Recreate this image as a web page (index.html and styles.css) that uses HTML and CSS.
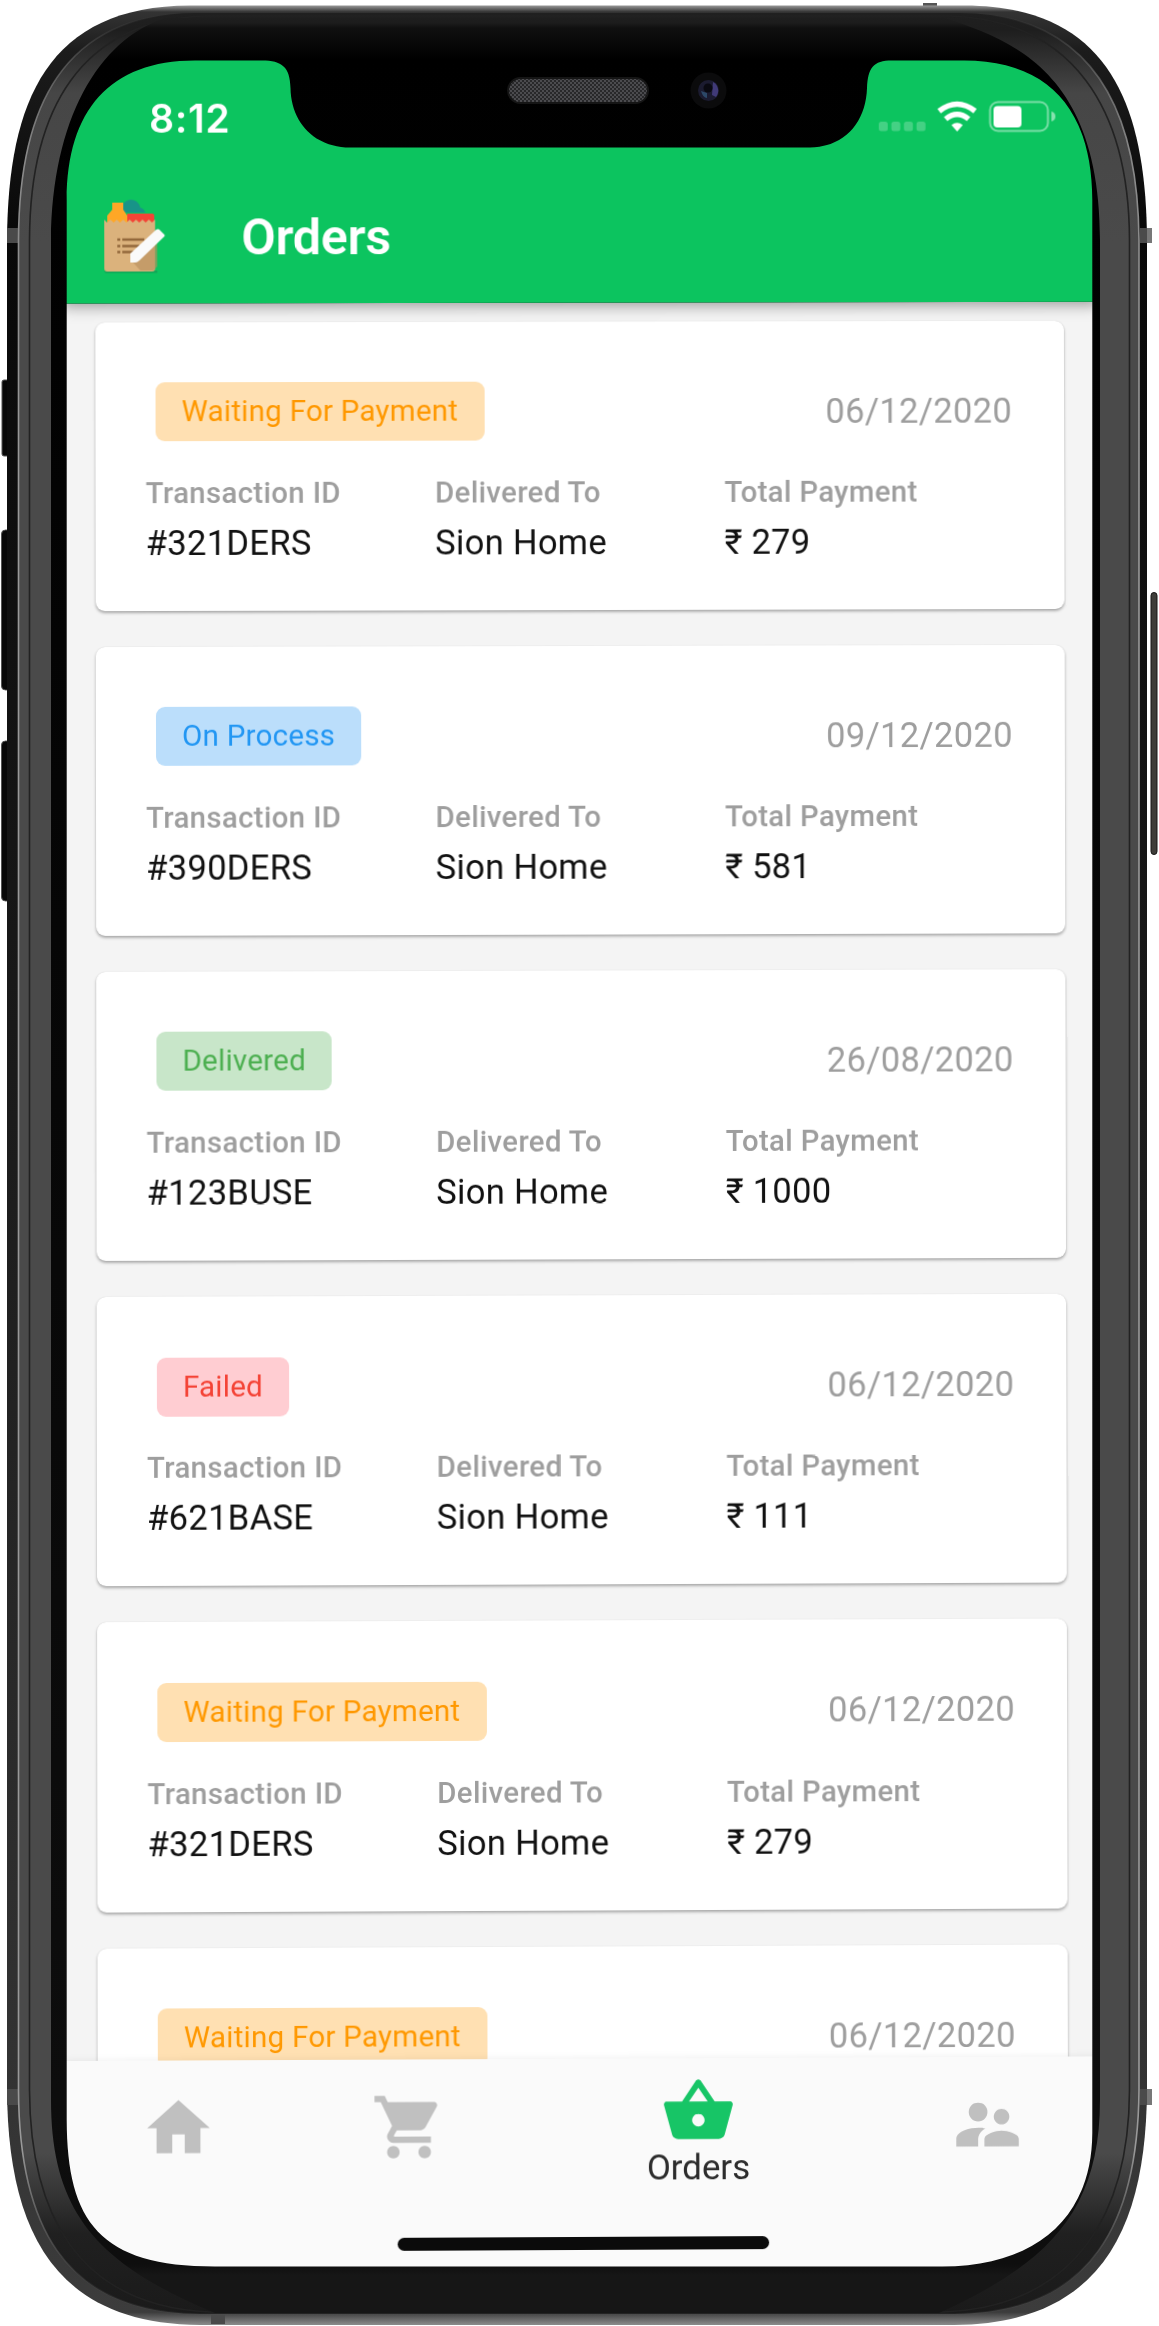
FILE: index.html
```html
<!DOCTYPE html>
<html lang="en">
<head>
<meta charset="utf-8">
<title>Orders</title>
<link rel="stylesheet" href="styles.css">
</head>
<body>
<div class="phone">
  <svg class="frame" viewBox="0 0 1159 2326" aria-hidden="true">
    <defs>
      <linearGradient id="edge" gradientUnits="userSpaceOnUse" x1="0" y1="5" x2="0" y2="2325">
        <stop offset="0" stop-color="#a0a0a0"/><stop offset=".003" stop-color="#333"/><stop offset=".02" stop-color="#1c1c1c"/>
        <stop offset=".1" stop-color="#080808"/><stop offset=".5" stop-color="#1c1c1c"/><stop offset=".9" stop-color="#333"/>
        <stop offset=".9945" stop-color="#3c3c3c"/><stop offset="1" stop-color="#8c8c8c"/>
      </linearGradient>
      <linearGradient id="band" gradientUnits="userSpaceOnUse" x1="0" y1="12" x2="0" y2="2314">
        <stop offset="0" stop-color="#202020"/><stop offset=".008" stop-color="#1e1e1e"/><stop offset=".035" stop-color="#464646"/>
        <stop offset=".1" stop-color="#4a4a4a"/><stop offset=".93" stop-color="#4a4a4a"/><stop offset=".965" stop-color="#202020"/>
        <stop offset="1" stop-color="#1a1a1a"/>
      </linearGradient>
      <linearGradient id="bezel" gradientUnits="userSpaceOnUse" x1="0" y1="14" x2="0" y2="2310">
        <stop offset="0" stop-color="#202020"/><stop offset=".004" stop-color="#1c1c1c"/><stop offset=".006" stop-color="#101010"/>
        <stop offset=".02" stop-color="#000"/><stop offset=".4" stop-color="#060606"/><stop offset=".98" stop-color="#0e0e0e"/>
        <stop offset=".985" stop-color="#161616"/><stop offset="1" stop-color="#161616"/>
      </linearGradient>
      <linearGradient id="shine" gradientUnits="userSpaceOnUse" x1="0" y1="14" x2="0" y2="2310">
        <stop offset="0" stop-color="#999" stop-opacity="0"/><stop offset=".06" stop-color="#888"/><stop offset=".2" stop-color="#999"/>
        <stop offset=".93" stop-color="#999"/><stop offset=".99" stop-color="#555" stop-opacity=".2"/>
      </linearGradient>
      <pattern id="mesh" width="4" height="4" patternUnits="userSpaceOnUse">
        <rect width="4" height="4" fill="#28282a"/><circle cx="1" cy="1" r=".9" fill="#5c5c60"/><circle cx="3" cy="3" r=".9" fill="#5c5c60"/>
      </pattern>
    </defs>
    <!-- side buttons -->
    <g fill="#080808" stroke="#555" stroke-width="1">
      <rect x="2" y="380" width="8" height="76" rx="2"/>
      <rect x="1.5" y="530" width="9" height="160" rx="4"/>
      <rect x="1.5" y="741" width="9" height="160" rx="4"/>
      <rect x="1151" y="592.500" width="6" height="262" rx="3" fill="#3e3d39" stroke="#161616"/>
    </g>
    <g fill="#777">
      <rect x="1140" y="228" width="12" height="15"/><rect x="1140" y="2089" width="12" height="16"/>
      <rect x="923" y="3" width="14" height="9" fill="#555"/>
    </g>
    <path fill="url(#edge)" d="M7 240C8 100 48 6 190 5.500H965C1106 6 1146 100 1147 240V2090C1146 2225 1104 2324 954 2325H200C50 2324 8 2225 7 2090Z"/>
    <path fill="#4a4a4a" d="M7 228h12v15H7zM7 2089h12v16H7zM211 2313h14v11h-14zM1140 228h7v15h-7zM1140 2089h7v16h-7z"/>
    <path fill="url(#band)" stroke="url(#shine)" stroke-width="1.600" d="M18.500 240C19 108 62 14 195 13H960C1092 14 1138 108 1139 240V2090C1138 2220 1094 2313 954 2314H200C60 2313 19 2220 18.500 2090Z"/>
    <path fill="none" stroke="#222" stroke-width="1.600" d="M29.500 240C30 110 80 20 205 16H950C1074 20 1129 110 1129.500 240V2090C1129 2210 1079 2306 944 2312H210C75 2306 30 2210 29.500 2090Z"/>
    <path fill="url(#bezel)" d="M51 240C52 120 98 40 165 18H945C1010 40 1100 70 1100 240V2100C1100 2215 1044 2265 939 2313H215C100 2265 51 2215 51 2100Z"/>
    <rect x="508" y="78" width="140" height="25" rx="12.500" fill="url(#mesh)" stroke="#151515" stroke-width="2"/>
    <circle cx="708.500" cy="90.500" r="18" fill="#0b0b0c"/>
    <circle cx="708.500" cy="90.500" r="10.500" fill="#1b1b30"/>
    <path fill="#403a78" d="M713 82a10 10 0 0 1 3 15l-4-2z"/><path fill="#2c4868" d="M701 91q2 7 6 7v-5z"/><circle cx="708" cy="88" r="4.500" fill="#090911"/>
  </svg>

  <main class="screen">
    <div class="app">
      <header class="top">
        <div class="status">
          <span class="time">8:12</span>
          <svg class="signals" viewBox="0 0 180 32" aria-hidden="true">
            <g fill="#fff" fill-opacity=".23"><rect x="0" y="21" width="9" height="9.500" rx="2.500"/><rect x="12.600" y="21" width="9" height="9.500" rx="2.500"/><rect x="25.200" y="21" width="9" height="9.500" rx="2.500"/><rect x="37.800" y="21" width="9" height="9.500" rx="2.500"/></g>
            <g fill="none" stroke="#fff" stroke-width="5.500"><path d="M60.500 10.500Q78.500 -3.500 96.500 10.500"/><path d="M67 18.500Q78.500 9 90 18.500"/></g>
            <path fill="#fff" d="M72.800 24.500Q78.500 20 84.200 24.500L78.500 31Z"/>
            <rect x="111.500" y="1.500" width="58" height="29" rx="8" fill="none" stroke="#fff" stroke-opacity=".45" stroke-width="2"/>
            <rect x="115" y="5.500" width="28" height="21.500" rx="4" fill="#fff"/>
            <path fill="#fff" fill-opacity=".5" d="M173 11q4 1 4 5t-4 5z"/>
          </svg>
        </div>
        <div class="bar">
          <svg class="logo" viewBox="0 0 64 76" aria-hidden="true">
            <path fill="#189488" d="M17 8q2-7 9-8 8 0 10 8 4 1 5 5H20z"/>
            <path fill="#ffa726" d="M8 3h11v7l4 6v9H3v-9l5-6z"/>
            <path fill="#f44336" d="M23 14h25q2 0 2 2v8H23z"/>
            <path fill="#178f50" opacity=".55" d="M0 71h53v2.500H1z"/>
            <path fill="#dbb27c" d="M0 20l3 3 3.200-3 3.200 3 3.200-3 3.200 3 3.200-3 3.200 3 3.200-3 3.200 3 3.200-3 3.200 3 3.200-3 3.200 3 3.200-3 3.200 3 3-3V69q0 3-3 3H3q-3 0-3-3z"/>
            <path fill="#b68d5d" opacity=".6" d="M27 61l9 10h13l4-4V36z"/>
            <path fill="none" stroke="#93683b" stroke-width="2.500" d="M13 40h3m2 0h22M13 46.500h3m2 0h17M13 52.500h3m2 0h12"/>
            <path fill="#fafafa" d="M26 54l26-24q2-1 3 0l5 5q1 1 0 2L35 61q-2 2-4 2h-5z"/>
          </svg>
          <h1>Orders</h1>
        </div>
      </header>

      <section class="list">
        <article class="card">
          <div class="head"><span class="tag waiting">Waiting For Payment</span><time>06/12/2020</time></div>
          <dl><div><dt>Transaction ID</dt><dd>#321DERS</dd></div><div><dt>Delivered To</dt><dd>Sion Home</dd></div><div><dt>Total Payment</dt><dd>₹ 279</dd></div></dl>
        </article>
        <article class="card">
          <div class="head"><span class="tag process">On Process</span><time>09/12/2020</time></div>
          <dl><div><dt>Transaction ID</dt><dd>#390DERS</dd></div><div><dt>Delivered To</dt><dd>Sion Home</dd></div><div><dt>Total Payment</dt><dd>₹ 581</dd></div></dl>
        </article>
        <article class="card">
          <div class="head"><span class="tag delivered">Delivered</span><time>26/08/2020</time></div>
          <dl><div><dt>Transaction ID</dt><dd>#123BUSE</dd></div><div><dt>Delivered To</dt><dd>Sion Home</dd></div><div><dt>Total Payment</dt><dd>₹ 1000</dd></div></dl>
        </article>
        <article class="card">
          <div class="head"><span class="tag failed">Failed</span><time>06/12/2020</time></div>
          <dl><div><dt>Transaction ID</dt><dd>#621BASE</dd></div><div><dt>Delivered To</dt><dd>Sion Home</dd></div><div><dt>Total Payment</dt><dd>₹ 111</dd></div></dl>
        </article>
        <article class="card">
          <div class="head"><span class="tag waiting">Waiting For Payment</span><time>06/12/2020</time></div>
          <dl><div><dt>Transaction ID</dt><dd>#321DERS</dd></div><div><dt>Delivered To</dt><dd>Sion Home</dd></div><div><dt>Total Payment</dt><dd>₹ 279</dd></div></dl>
        </article>
        <article class="card">
          <div class="head"><span class="tag waiting">Waiting For Payment</span><time>06/12/2020</time></div>
        </article>
      </section>

      <footer class="bottom">
        <nav class="tabs">
          <a class="tab"><svg viewBox="0 0 24 24"><path d="M10 20v-6h4v6h5v-8h3L12 3 2 12h3v8z"/></svg></a>
          <a class="tab"><svg viewBox="0 0 24 24"><path d="M7 18c-1.100 0-1.990.9-1.990 2S5.900 22 7 22s2-.9 2-2-.9-2-2-2zM1 2v2h2l3.600 7.590-1.350 2.450c-.16.28-.25.61-.25.960 0 1.100.9 2 2 2h12v-2H7.420c-.14 0-.25-.11-.25-.25l.03-.12.9-1.630h7.450c.75 0 1.410-.41 1.750-1.030l3.580-6.490c.08-.14.12-.31.12-.48 0-.55-.45-1-1-1H5.210l-.94-2H1zm16 16c-1.100 0-1.990.9-1.990 2s.89 2 1.990 2 2-.9 2-2-.9-2-2-2z"/></svg></a>
          <a class="tab active"><svg viewBox="0 0 24 24"><path d="M17.210 9l-4.380-6.560c-.19-.28-.51-.42-.83-.42-.32 0-.64.14-.83.430L6.790 9H2c-.55 0-1 .45-1 1 0 .09.010.18.040.27l2.540 9.270c.23.840 1 1.460 1.920 1.460h13c.92 0 1.690-.62 1.930-1.460l2.540-9.270L23 10c0-.55-.45-1-1-1h-4.790zM9 9l3-4.400L15 9H9zm3 8c-1.100 0-2-.9-2-2s.9-2 2-2 2 .9 2 2-.9 2-2 2z"/></svg><span>Orders</span></a>
          <a class="tab"><svg viewBox="0 0 24 24"><path d="M16.500 12c1.380 0 2.490-1.120 2.490-2.500S17.880 7 16.500 7C15.120 7 14 8.120 14 9.500s1.120 2.500 2.500 2.500zM9 11c1.660 0 2.990-1.340 2.990-3S10.660 5 9 5C7.340 5 6 6.340 6 8s1.340 3 3 3zm7.500 3c-1.830 0-5.500.92-5.500 2.750V19h11v-2.250c0-1.830-3.670-2.750-5.500-2.750zM9 13c-2.330 0-7 1.170-7 3.500V19h7v-2.250c0-.85.33-2.340 2.370-3.470C10.500 13.100 9.660 13 9 13z"/></svg></a>
        </nav>
        <div class="indicator"></div>
      </footer>
    </div>
  </main>
</div>
</body>
</html>
```
FILE: styles.css
```css
* { box-sizing: border-box; }

body {
  margin: 0;
  background: #fff;
  font-family: Roboto, "Liberation Sans", sans-serif;
}

.phone {
  position: relative;
  width: 1159px;
  height: 2326px;
  overflow: hidden;
}

.frame {
  position: absolute;
  inset: 0;
  width: 1159px;
  height: 2326px;
}

/* Rounded display with the notch cut out of its top edge */
.screen {
  position: relative;
  height: 2326px;
  padding: 60px 67px 0;
  overflow: hidden;
  clip-path: path("M66.700 200C67 110 110 60.500 195 60.500H262C282 60.500 290 67 290.500 88C291 122 314 147.500 350 147.500H810C845 147 866 122 867 88C868 68 873 60.500 892 60.500H964C1049 60.500 1092 110 1092.300 200V2133C1092 2215 1039 2266.500 942 2266.500H215C100 2266.500 67 2222 66.700 2120Z");
}

/* The display content sits at a slight angle inside the frame */
.app {
  width: 1038px;
  margin: 0 -6px;
  transform-origin: 6px 0;
  transform: matrix3d(1.0008, -0.00137, 0, 0.00000155, 0.0013, 0.998, 0, -0.000001, 0, 0, 1, 0, 0, 0, 0, 1);
}

.top {
  position: relative;
  z-index: 1;
  height: 244px;
  padding: 0 6px;
  background: #0cc45f;
  box-shadow: 0 3px 14px rgba(0, 0, 0, .38);
}

.status {
  display: flex;
  justify-content: space-between;
  align-items: flex-start;
  height: 118px;
  padding: 36px 34px 0 82px;
  color: #fff;
}

.time {
  font: 600 39px/46px Inter, sans-serif;
  letter-spacing: .8px;
}

.signals {
  width: 180px;
  height: 32px;
  margin-top: 6px;
}

.bar {
  display: flex;
  align-items: center;
  height: 120px;
  padding-left: 37px;
}

.logo {
  width: 64px;
  height: 76px;
  margin-right: 73px;
}

h1 {
  margin: 0;
  color: #fff;
  font-size: 50px;
  line-height: 60px;
  font-weight: 600;
  letter-spacing: -.2px;
}

.list {
  height: 1757px;
  padding: 18.600px 34px 0;
  overflow: hidden;
  background: #f4f4f4;
}

.card {
  width: 969px;
  height: 289.200px;
  margin-bottom: 36px;
  padding: 60px 51px 0 50px;
  border-radius: 9px;
  background: #fff;
  box-shadow: 0 2px 3px rgba(0, 0, 0, .3), 0 0 1px rgba(0, 0, 0, .15);
}

.head {
  display: flex;
  justify-content: space-between;
  align-items: center;
  height: 60px;
  padding: 0 1px 0 10px;
}

.tag {
  height: 59px;
  padding: 0 26px;
  border-radius: 9px;
  font-size: 29.500px;
  line-height: 59px;
  letter-spacing: .25px;
}

.waiting { background: #ffe0b2; color: #ff9800; }
.process { background: #bbdefb; color: #2196f3; }
.delivered { background: #c8e6c9; color: #4caf50; }
.failed { background: #ffcdd2; color: #f44336; }

time {
  color: #9e9e9e;
  font-size: 34.500px;
  line-height: 40px;
  letter-spacing: .35px;
}

dl {
  display: grid;
  grid-template-columns: repeat(3, 1fr);
  margin: 34.300px 0 0;
}

dt {
  color: #9e9e9e;
  font-size: 29.300px;
  line-height: 34px;
  font-weight: 500;
  letter-spacing: .38px;
}

dd {
  margin: 13px 0 0;
  color: #111;
  font-size: 34.500px;
  line-height: 40px;
  letter-spacing: .3px;
}

.bottom {
  position: relative;
  height: 225px;
  padding: 0 6px;
  background: #fafafa;
  box-shadow: 0 0 8px rgba(0, 0, 0, .07);
}

.tabs {
  display: grid;
  grid-template-columns: 217px 242px 337px 241px;
  height: 178px;
}

.tab {
  display: flex;
  flex-direction: column;
  align-items: center;
  padding-top: 30px;
}

.tab svg {
  flex: none;
  width: 75px;
  height: 75px;
  fill: #c0c0c0;
}

.tab.active {
  padding-top: 15px;
  color: #2c2c2c;
  font-size: 34.800px;
  line-height: 38px;
}

.tab.active svg { fill: #17c566; }

.indicator {
  width: 371px;
  height: 13px;
  margin-left: 327px;
  border-radius: 7px;
  background: #0b0b0b;
}
```
